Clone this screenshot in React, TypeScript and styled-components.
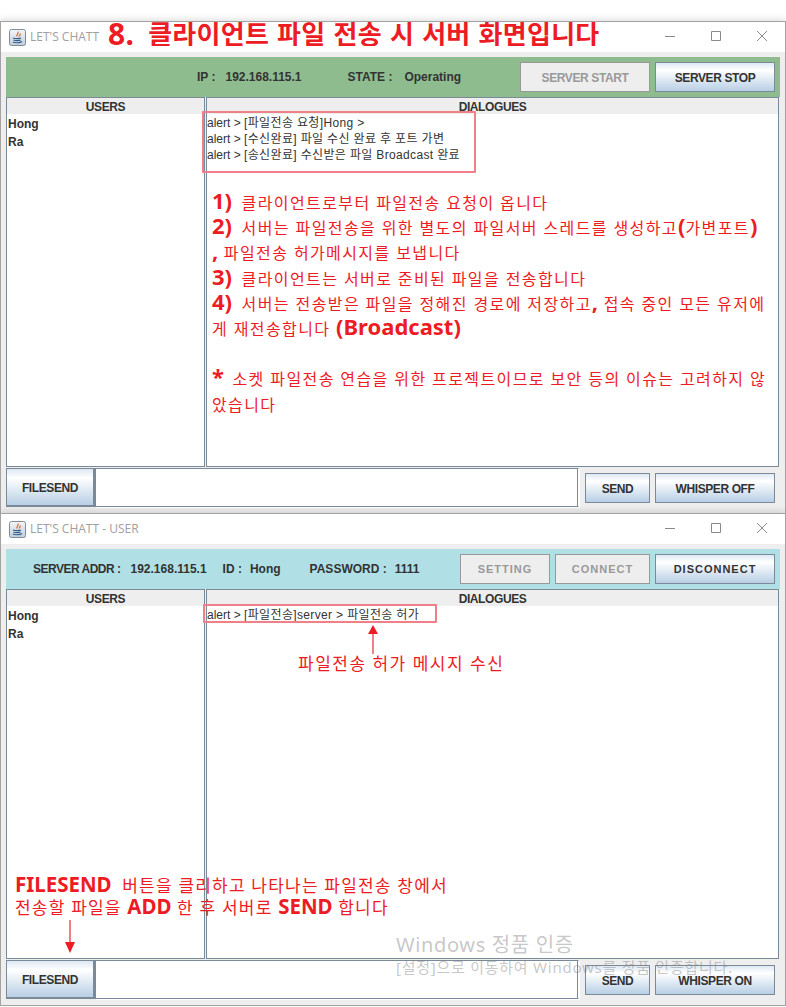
import React from "react";
import styled, { createGlobalStyle } from "styled-components";

const Global = createGlobalStyle`
  html, body { margin: 0; padding: 0; background: #fff; }
  * { box-sizing: border-box; }
`;

const UI = `"Liberation Sans", "Noto Sans CJK KR", sans-serif`;
const NOTE = `"Noto Sans", "Noto Sans CJK KR", sans-serif`;
const RED = "#ed1c24";
const LINE = "#7a8a99";

const Page = styled.div`
  position: relative;
  width: 786px;
  height: 1007px;
  padding-top: 21px;
  overflow: hidden;
  background: #fff;
`;
const Frame = styled.section<{ $last?: boolean }>`
  width: 786px;
  border: 1px solid #a3a3a3;
  border-bottom-width: ${(p) => (p.$last ? "1px" : "0")};
  box-shadow: 0 -2px 6px rgba(0, 0, 0, 0.12);
  background: #eeeeee;
  position: relative;
`;
const TitleBar = styled.header`
  height: 30px;
  background: #fff;
  display: flex;
  align-items: center;
  padding-left: 8px;
`;
const TitleText = styled.span`
  margin-left: 4px;
  font: 12px/16px "Open Sans", "Noto Sans", sans-serif;
  color: #a0a0a0;
`;
const Controls = styled.div`
  margin-left: auto;
  display: flex;
`;
const Ctl = styled.svg`
  width: 46px;
  height: 30px;
  display: block;
  stroke: #8a8a8a;
  fill: none;
`;
const Body = styled.div`
  padding: 5px;
`;
const TopPanel = styled.div<{ $bg: string }>`
  height: 40px;
  background: ${(p) => p.$bg};
  display: flex;
  align-items: center;
  padding-right: 5px;
`;
const Info = styled.span<{ $at: number; $tight?: boolean }>`
  margin-left: ${(p) => p.$at}px;
  font: bold 12px ${UI};
  color: #333;
  white-space: nowrap;
  letter-spacing: ${(p) => (p.$tight ? "-0.5px" : "0")};
`;
const Buttons = styled.div`
  margin-left: auto;
  display: flex;
  gap: 5px;
`;
const Btn = styled.div<{ $w: number; $off?: boolean; $wide?: boolean; $h?: number }>`
  width: ${(p) => p.$w}px;
  height: ${(p) => p.$h ?? 30}px;
  flex: none;
  display: flex;
  align-items: center;
  justify-content: center;
  padding-top: ${(p) => (p.$wide ? "0" : "1px")};
  border: 1px solid ${(p) => (p.$off ? "#999" : LINE)};
  background: ${(p) =>
    p.$off ? "#eeeeee" : "linear-gradient(#dde8f3 0%, #fff 25%, #b8cfe5 100%)"};
  color: ${(p) => (p.$off ? "#999" : "#333")};
  font: bold ${(p) => (p.$wide ? "11px" : "12px")} ${UI};
  letter-spacing: ${(p) => (p.$wide ? "1px" : "-0.4px")};
  white-space: nowrap;
`;
const Center = styled.div`
  height: 370px;
  display: flex;
  gap: 1px;
`;
const Pane = styled.div<{ $grow?: boolean }>`
  width: ${(p) => (p.$grow ? "573px" : "199px")};
  flex: none;
  border: 1px solid ${LINE};
  background: #fff;
  display: flex;
  flex-direction: column;
`;
const PaneHead = styled.div`
  height: 16px;
  flex: none;
  background: #eeeeee;
  text-align: center;
  font: bold 12px/18px ${UI};
  letter-spacing: -0.4px;
  color: #333;
`;
const UserName = styled.div`
  padding-left: 1px;
  font: bold 12px/18px ${UI};
  color: #333;
  &:nth-of-type(2) { margin-top: 1px; }
`;
const Msg = styled.div`
  font: 12px/16px ${UI};
  color: #333;
  letter-spacing: 0.35px;
  white-space: nowrap;
  &:nth-of-type(2) { margin-top: 1px; }
`;
const MsgTag = styled.span`
  letter-spacing: 0;
`;
const BottomRow = styled.div`
  margin-top: 1px;
  height: 40px;
  display: flex;
  align-items: center;
`;
const FileBtn = styled(Btn)`
  border-width: 1px 2px 2px 1px;
  align-self: flex-start;
`;
const Field = styled.div`
  width: 484px;
  height: 39px;
  flex: none;
  align-self: flex-start;
  margin-right: 6px;
  background: #fff;
  border: 1px solid ${LINE};
  border-right-color: #fff;
  box-shadow: inset -1px 0 0 ${LINE}, 1px 1px 0 #fff;
`;
const RowBtns = styled.div`
  display: flex;
  gap: 5px;
`;

const Heading = styled.div`
  position: absolute;
  left: 108px;
  top: 22px;
  height: 24px;
  overflow: hidden;
  display: flex;
  align-items: center;
  white-space: nowrap;
  color: ${RED};
  font: bold 26px/24px ${NOTE};
  word-spacing: 1px;
  letter-spacing: 0.27px;
`;
const HeadNum = styled.span`
  font-size: 30px;
  margin-right: 14px;
`;
const Note = styled.div<{ $x: number; $y: number; $size?: number }>`
  position: absolute;
  left: ${(p) => p.$x}px;
  top: ${(p) => p.$y}px;
  color: ${RED};
  font: ${(p) => p.$size ?? 16}px/25px ${NOTE};
  white-space: pre;
`;
const NoteLine = styled.div<{ $sp?: number; $h?: number }>`
  height: ${(p) => p.$h ?? 25.2}px;
  letter-spacing: ${(p) => p.$sp ?? 1.4}px;
`;
const B = styled.b<{ $s?: number; $gap?: number }>`
  font-size: ${(p) => p.$s ?? 22}px;
  line-height: 10px;
  letter-spacing: 0;
  font-weight: 700;
  margin-right: ${(p) => p.$gap ?? 0}px;
`;
const RedBox = styled.div<{ $x: number; $y: number; $w: number; $h: number }>`
  position: absolute;
  left: ${(p) => p.$x}px;
  top: ${(p) => p.$y}px;
  width: ${(p) => p.$w}px;
  height: ${(p) => p.$h}px;
  border: 2px solid #ef8089;
  border-radius: 1px;
`;
const Arrow = styled.svg<{ $x: number; $y: number }>`
  position: absolute;
  left: ${(p) => p.$x}px;
  top: ${(p) => p.$y}px;
  display: block;
`;
const Watermark = styled.div`
  position: absolute;
  left: 396px;
  top: 932px;
  color: rgba(130, 130, 130, 0.45);
  font-family: "Noto Sans", "Noto Sans CJK KR", sans-serif;
  white-space: nowrap;
`;
const WmTitle = styled.div`
  font-size: 20px;
  line-height: 26px;
  letter-spacing: 0.65px;
`;
const WmSub = styled.div`
  font-size: 15px;
  line-height: 18px;
  letter-spacing: 0.75px;
`;

const JavaIcon = () => (
  <svg width="17" height="17" viewBox="0 0 17 17">
    <defs>
      <linearGradient id="jv" x1="0" y1="0" x2="0" y2="1">
        <stop offset="0" stopColor="#f4f6f8" />
        <stop offset="1" stopColor="#c3ccd6" />
      </linearGradient>
    </defs>
    <rect x="0.5" y="0.5" width="16" height="16" rx="2" fill="url(#jv)" stroke="#7f8c9b" />
    <path d="M9 2.5c1 2-2 3-1 5M11 4.5c1 1-1 2-1 3" stroke="#d9642a" strokeWidth="1.2" fill="none" />
    <path d="M4 9c2 .8 7 .8 8 0M4.5 11c2 .8 6 .8 7 0M4 13c2 1 7 1 9-.5" stroke="#2f5f8f" strokeWidth="1.1" fill="none" />
  </svg>
);

const WinControls = () => (
  <Controls>
    <Ctl viewBox="0 0 46 30"><path d="M18 14.5h10" /></Ctl>
    <Ctl viewBox="0 0 46 30"><path d="M18.5 9.5h9v9h-9z" /></Ctl>
    <Ctl viewBox="0 0 46 30"><path d="M18 9l10 10M28 9L18 19" /></Ctl>
  </Controls>
);

export default function App() {
  return (
    <Page>
      <Global />
      <Frame>
        <TitleBar>
          <JavaIcon />
          <TitleText>LET'S CHATT</TitleText>
          <WinControls />
        </TitleBar>
        <Body>
          <TopPanel $bg="#8fbc8f">
            <Info $at={191}>IP :</Info>
            <Info $at={10}>192.168.115.1</Info>
            <Info $at={46}>STATE :</Info>
            <Info $at={12}>Operating</Info>
            <Buttons>
              <Btn $w={130} $off>SERVER START</Btn>
              <Btn $w={120}>SERVER STOP</Btn>
            </Buttons>
          </TopPanel>
          <Center>
            <Pane>
              <PaneHead>USERS</PaneHead>
              <UserName>Hong</UserName>
              <UserName>Ra</UserName>
            </Pane>
            <Pane $grow>
              <PaneHead>DIALOGUES</PaneHead>
              <Msg><MsgTag>alert &gt; </MsgTag>[파일전송 요청]Hong &gt;</Msg>
              <Msg><MsgTag>alert &gt; </MsgTag>[수신완료] 파일 수신 완료 후 포트 가변</Msg>
              <Msg><MsgTag>alert &gt; </MsgTag>[송신완료] 수신받은 파일 Broadcast 완료</Msg>
            </Pane>
          </Center>
          <BottomRow>
            <FileBtn $w={89} $h={39}>FILESEND</FileBtn>
            <Field />
            <RowBtns>
              <Btn $w={65}>SEND</Btn>
              <Btn $w={120}>WHISPER OFF</Btn>
            </RowBtns>
          </BottomRow>
        </Body>
      </Frame>
      <Frame $last>
        <TitleBar>
          <JavaIcon />
          <TitleText>LET'S CHATT - USER</TitleText>
          <WinControls />
        </TitleBar>
        <Body>
          <TopPanel $bg="#b0e0e6">
            <Info $at={27} $tight>SERVER ADDR :</Info>
            <Info $at={10}>192.168.115.1</Info>
            <Info $at={16}>ID :</Info>
            <Info $at={8}>Hong</Info>
            <Info $at={29}>PASSWORD :</Info>
            <Info $at={8}>1111</Info>
            <Buttons>
              <Btn $w={90} $off $wide>SETTING</Btn>
              <Btn $w={95} $off $wide>CONNECT</Btn>
              <Btn $w={120} $wide>DISCONNECT</Btn>
            </Buttons>
          </TopPanel>
          <Center>
            <Pane>
              <PaneHead>USERS</PaneHead>
              <UserName>Hong</UserName>
              <UserName>Ra</UserName>
            </Pane>
            <Pane $grow>
              <PaneHead>DIALOGUES</PaneHead>
              <Msg><MsgTag>alert &gt; </MsgTag>[파일전송]server &gt; 파일전송 허가</Msg>
            </Pane>
          </Center>
          <BottomRow>
            <FileBtn $w={89} $h={39}>FILESEND</FileBtn>
            <Field />
            <RowBtns>
              <Btn $w={65}>SEND</Btn>
              <Btn $w={120}>WHISPER ON</Btn>
            </RowBtns>
          </BottomRow>
        </Body>
      </Frame>

      <Heading>
        <HeadNum>8.</HeadNum>클라이언트 파일 전송 시 서버 화면입니다
      </Heading>
      <RedBox $x={202} $y={111} $w={274} $h={62} />
      <Note $x={212} $y={191}>
        <NoteLine><B $gap={4}>1)</B> 클라이언트로부터 파일전송 요청이 옵니다</NoteLine>
        <NoteLine><B $gap={4}>2)</B> 서버는 파일전송을 위한 별도의 파일서버 스레드를 생성하고<B>(</B>가변포트<B>)</B></NoteLine>
        <NoteLine><B>,</B> 파일전송 허가메시지를 보냅니다</NoteLine>
        <NoteLine><B $gap={4}>3)</B> 클라이언트는 서버로 준비된 파일을 전송합니다</NoteLine>
        <NoteLine><B $gap={4}>4)</B> 서버는 전송받은 파일을 정해진 경로에 저장하고<B>,</B> 접속 중인 모든 유저에</NoteLine>
        <NoteLine>게 재전송합니다 <B>(Broadcast)</B></NoteLine>
        <NoteLine>{" "}</NoteLine>
        <NoteLine><B $gap={3}>*</B> 소켓 파일전송 연습을 위한 프로젝트이므로 보안 등의 이슈는 고려하지 않</NoteLine>
        <NoteLine>았습니다</NoteLine>
      </Note>
      <RedBox $x={203} $y={604} $w={234} $h={19} />
      <Arrow $x={366} $y={625} width="14" height="30" viewBox="0 0 14 30">
        <path d="M7 8V29" stroke="#f0808a" strokeWidth="2" />
        <path d="M7 0L12 9H2z" fill={RED} />
      </Arrow>
      <Note $x={298} $y={651} $size={17}>
        <NoteLine $sp={1.5}>파일전송 허가 메시지 수신</NoteLine>
      </Note>
      <Note $x={15} $y={873} $size={17}>
        <NoteLine $sp={1.2} $h={22}><B $s={20.5} $gap={5}>FILESEND</B> 버튼을 클리하고 나타나는 파일전송 창에서</NoteLine>
        <NoteLine $sp={1.2} $h={22}>전송할 파일을 <B $s={20.5}>ADD</B> 한 후 서버로 <B $s={20.5}>SEND</B> 합니다</NoteLine>
      </Note>
      <Arrow $x={63} $y={920} width="14" height="34" viewBox="0 0 14 34">
        <path d="M7 0V25" stroke="#e8505a" strokeWidth="1.5" />
        <path d="M7 33L2 22H12z" fill={RED} />
      </Arrow>
      <Watermark>
        <WmTitle>Windows 정품 인증</WmTitle>
        <WmSub>[설정]으로 이동하여 Windows를 정품 인증합니다.</WmSub>
      </Watermark>
    </Page>
  );
}
